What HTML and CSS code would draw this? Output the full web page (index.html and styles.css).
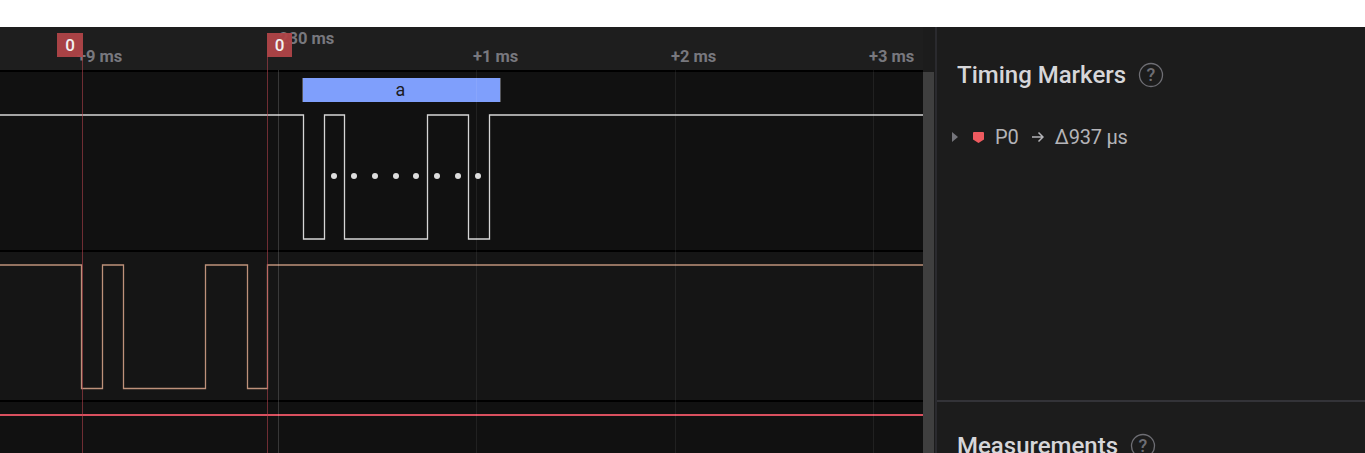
FILE: index.html

```html
<!DOCTYPE html>
<html>
<head>
    <meta charset="UTF-8" />
    <title>Timing Markers</title>
    <link rel="stylesheet" href="styles.css">
</head>
<body>
    <div class="topbar"></div>
    <div class="main">
        <div class="timeline">
            <div class="tracks">
                <div class="ruler">
                    <span class="tick t9">+9 ms</span>
                    <span class="tick t30">230 ms</span>
                    <span class="tick t1">+1 ms</span>
                    <span class="tick t2">+2 ms</span>
                    <span class="tick t3">+3 ms</span>
                </div>
                <div class="row row1">
                    <svg class="wave" width="923" height="178" viewBox="0 72 923 178">
                        <path class="line-white" d="M0 115H303.5V239H324.5V115H344.5V239H427.5V115H468.5V239H489.5V115H923" />
                        <g class="dots">
                            <circle cx="334" cy="176" r="3" />
                            <circle cx="354" cy="176" r="3" />
                            <circle cx="375" cy="176" r="3" />
                            <circle cx="396" cy="176" r="3" />
                            <circle cx="416" cy="176" r="3" />
                            <circle cx="437" cy="176" r="3" />
                            <circle cx="458" cy="176" r="3" />
                            <circle cx="478" cy="176" r="3" />
                        </g>
                    </svg>
                    <div class="bubble">a</div>
                </div>
                <div class="row row2">
                    <svg class="wave" width="923" height="148" viewBox="0 252 923 148">
                        <path class="line-tan" d="M0 265H81.5V388.5H102.5V265H123.5V388.5H205.5V265H247.5V388.5H267.5V265H923" />
                    </svg>
                </div>
                <div class="row row3">
                    <div class="flatline"></div>
                </div>
                <i class="grid g0"></i>
                <i class="grid g1"></i>
                <i class="grid g2"></i>
                <i class="grid g3"></i>
                <i class="marker m1"></i>
                <i class="marker m2"></i>
                <span class="flag f1">0</span>
                <span class="flag f2">0</span>
            </div>
            <div class="scrollbar"></div>
        </div>
        <div class="side">
            <div class="panel panel-timing">
                <h2>Timing Markers <svg class="help" width="26" height="26" viewBox="0 0 26 26"><circle cx="13" cy="13" r="11.5" /><text x="13" y="19">?</text></svg></h2>
                <div class="item">
                    <span class="caret"></span>
                    <svg class="pin" width="11" height="11" viewBox="0 0 11 11"><path d="M1 0H10Q11 0 11 1V7.5L5.5 11L0 7.5V1Q0 0 1 0Z" /></svg>
                    <span class="p0">P0</span>
                    <svg class="arrow" width="13" height="12" viewBox="0 0 13 12"><path d="M1 6H12M7.5 1.5L12 6L7.5 10.5" /></svg>
                    <span>Δ937 µs</span>
                </div>
            </div>
            <div class="panel panel-measure">
                <h2>Measurements <svg class="help" width="26" height="26" viewBox="0 0 26 26"><circle cx="13" cy="13" r="11.5" /><text x="13" y="19">?</text></svg></h2>
            </div>
        </div>
    </div>
</body>
</html>
```

FILE: styles.css

```css
*{ margin:0; padding:0; box-sizing:border-box;}
html,body{ height:100%; overflow:hidden;}
body{
    background:#1c1c1c;
    font-family:Roboto,"Liberation Sans",sans-serif;
}
.topbar{
    height:27px;
    background:#fff;
}
.main{
    display:flex;
    height:426px;
}
.timeline{
    display:flex;
    width:935px;
    flex-shrink:0;
    background:#1c1c1c;
}
.tracks{
    position:relative;
    width:923px;
    overflow:hidden;
}
.ruler{
    position:relative;
    height:45px;
    background:#1e1e1e;
    border-bottom:2px solid #000;
}
.tick{
    position:absolute;
    color:#78787e;
    font-size:16.5px;
    font-weight:700;
    line-height:18px;
    white-space:nowrap;
}
.t9{ left:77px; top:21px;}
.t30{ left:279px; top:3px;}
.t1{ left:473px; top:21px;}
.t2{ left:671px; top:21px;}
.t3{ left:869px; top:21px;}
.row{
    position:relative;
    border-bottom:2px solid #000;
}
.row1{ height:180px; background:#111;}
.row2{ height:150px; background:#151515;}
.row3{ height:60px; padding-top:12px; background:#111; border-bottom:0;}
.wave{ display:block;}
.line-white,.line-tan{ fill:none; stroke-width:1.3;}
.line-white{ stroke:#d6d6d6;}
.line-tan{ stroke:#bd917a;}
.dots circle{ fill:#ddd;}
.bubble{
    position:absolute;
    left:302px;
    top:6px;
    width:199px;
    height:24px;
    line-height:24px;
    text-align:center;
    background:#7f9ffc;
    border-left:1px solid #55565c;
    border-right:1px solid #55565c;
    color:#1c1c1e;
    font-size:18px;
    padding-right:2px;
}
.flatline{
    height:2px;
    background:#d9505f;
}
.grid,.marker{
    position:absolute;
    bottom:0;
    width:1px;
}
.grid{
    top:43px;
    background:rgba(255,255,255,.07);
}
.g0{ left:278px; background:rgba(255,255,255,.16);}
.g1{ left:476px;}
.g2{ left:675px;}
.g3{ left:873px;}
.marker{
    top:30px;
    background:rgba(190,70,80,.55);
}
.m1{ left:82px;}
.m2{ left:267px;}
.flag{
    position:absolute;
    top:6px;
    height:24px;
    line-height:24px;
    text-align:center;
    background:rgba(176,68,72,.95);
    color:#f2f2f2;
    font-size:17px;
    font-weight:500;
}
.f1{ left:57px; width:26px;}
.f2{ left:267px; width:25px;}
.scrollbar{
    width:11px;
    margin-top:45px;
    background:#3f3f3f;
}
.side{
    width:430px;
    flex-shrink:0;
    border-left:2px solid #2a2a2e;
    background:#1c1c1c;
}
.panel{
    padding:33px 20px 0;
}
.panel-timing{
    height:375px;
    border-bottom:2px solid #333338;
}
.panel-measure{ padding-top:29px;}
.panel h2{
    display:flex;
    align-items:center;
    gap:12px;
    height:30px;
    color:#d6d6d9;
    font-size:24px;
    font-weight:500;
    white-space:nowrap;
}
.help circle{
    fill:none;
    stroke:#6e6e74;
    stroke-width:1.3;
}
.help text{
    fill:#6e6e74;
    font-size:18px;
    text-anchor:middle;
}
.item{
    display:flex;
    align-items:center;
    height:24px;
    margin:35px 0 0 -5px;
    color:#b4b4b8;
    font-size:20px;
    white-space:nowrap;
}
.item span:last-child{ letter-spacing:-.25px;}
.caret{
    width:0;
    height:0;
    border-left:6px solid #74747a;
    border-top:5px solid transparent;
    border-bottom:5px solid transparent;
    margin-right:15px;
}
.pin{ margin:0 11px 0 0;}
.pin path{ fill:#ee5a5f;}
.arrow{ margin:0 11px 0 12px;}
.arrow path{
    fill:none;
    stroke:#b4b4b8;
    stroke-width:1.5;
}
```
